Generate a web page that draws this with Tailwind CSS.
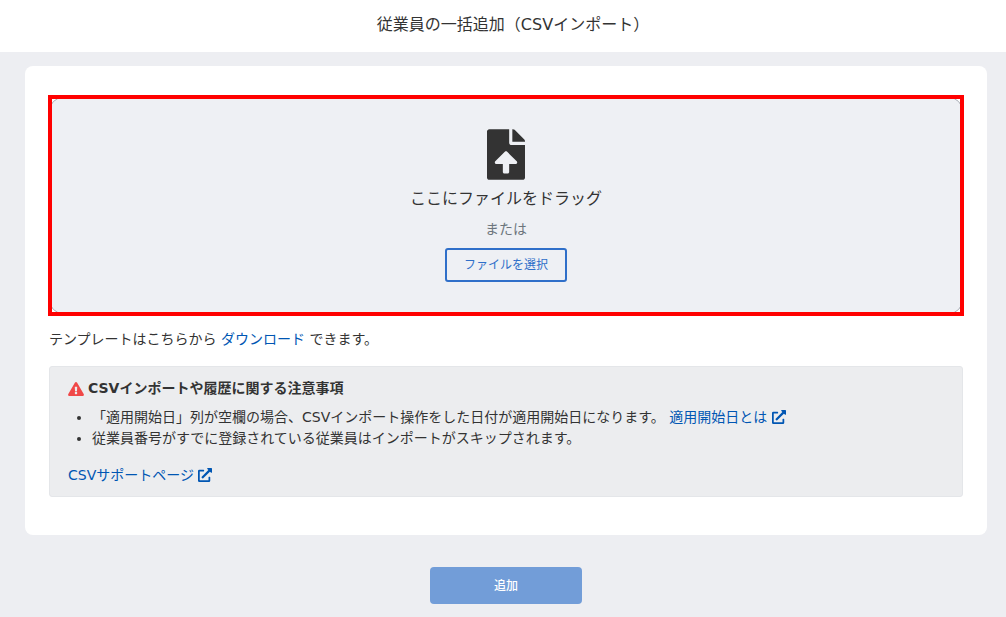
<!DOCTYPE html>
<html lang="ja">
<head>
    <meta charset="UTF-8">
    <meta name="viewport" content="width=device-width, initial-scale=1.0">
    <title>従業員の一括追加（CSVインポート）</title>
    <script src="https://cdn.jsdelivr.net/npm/@tailwindcss/browser@4"></script>
</head>
<body class="min-h-screen bg-[#edeef2] font-['DejaVu_Sans','Noto_Sans_CJK_JP',sans-serif] text-sm leading-[21px] text-[#333]">
    <header class="flex h-13 items-center justify-center bg-white pb-0.5 pl-5">
        <h1 class="text-base">従業員の一括追加（CSVインポート）</h1>
    </header>

    <main class="pt-3.5 pr-[19px] pl-[25px]">
        <section class="rounded-lg bg-white px-6 pt-[31px] pb-[38px]">
            <!-- drop zone -->
            <div class="relative flex flex-col items-center rounded-[14px] border border-[#a9adb5] bg-[#eef0f4] pt-[31px] pb-[31px]">
                <svg class="h-[51px] w-[38px]" viewBox="0 0 384 512" fill="#333" aria-hidden="true">
                    <path d="M224 136V0H24C10.7 0 0 10.7 0 24v464c0 13.3 10.7 24 24 24h336c13.3 0 24-10.7 24-24V160H248c-13.2 0-24-10.8-24-24zm65.18 216.01H224v80c0 8.84-7.16 16-16 16h-32c-8.84 0-16-7.16-16-16v-80H94.82c-14.28 0-21.41-17.29-11.27-27.36l96.42-95.7c6.65-6.61 17.39-6.61 24.04 0l96.42 95.7c10.15 10.07 3.03 27.36-11.25 27.36zM377 105L279.1 7c-4.5-4.5-10.6-7-17-7H256v128h128v-6.1c0-6.3-2.5-12.4-7-16.9z"/>
                </svg>
                <p class="mt-[7px] text-base leading-6">ここにファイルをドラッグ</p>
                <p class="mt-2 text-[#6c757d]">または</p>
                <button type="button" class="mt-2 h-[34px] rounded-[3px] border-2 border-[#2f6fc9] px-[17px] text-xs text-[#2f6fc9]">ファイルを選択</button>
                <div class="pointer-events-none absolute -inset-x-0.5 -inset-y-[3px] border-4 border-[#ff0000]"></div>
            </div>

            <p class="mt-[15px]">テンプレートはこちらから <a href="#" class="text-[#0056b3]">ダウンロード</a> できます。</p>

            <div class="mt-4 rounded-[3px] border border-[#e4e6e9] bg-[#ecedef] px-[18px] pt-[11px] pb-2.5">
                <h2 class="flex items-center gap-1 font-bold">
                    <svg class="h-3.5 w-4" viewBox="0 0 576 512" fill="#f04848" aria-hidden="true">
                        <path d="M569.517 440.013C587.975 472.007 564.806 512 527.94 512H48.054c-36.937 0-59.999-40.055-41.577-71.987L246.423 23.985c18.467-32.009 64.72-31.951 83.154 0l239.94 416.028zM288 354c-25.405 0-46 20.595-46 46s20.595 46 46 46 46-20.595 46-46-20.595-46-46-46zm-43.673-165.346l7.418 136c.347 6.364 5.609 11.346 11.982 11.346h48.546c6.373 0 11.635-4.982 11.982-11.346l7.418-136c.375-6.874-5.098-12.654-11.982-12.654h-63.383c-6.884 0-12.356 5.78-11.981 12.654z"/>
                    </svg>
                    CSVインポートや履歴に関する注意事項
                </h2>
                <ul class="mt-2 list-disc pl-6">
                    <li>「適用開始日」列が空欄の場合、CSVインポート操作をした日付が適用開始日になります。
                        <a href="#" class="text-[#0056b3]">適用開始日とは
                            <svg class="inline h-3.5 w-3.5 align-[-2px]" viewBox="0 0 512 512" fill="currentColor" aria-hidden="true">
                                <path d="M432 320H400a16 16 0 0 0-16 16V448H64V128H208a16 16 0 0 0 16-16V80a16 16 0 0 0-16-16H48A48 48 0 0 0 0 112V464a48 48 0 0 0 48 48H400a48 48 0 0 0 48-48V336A16 16 0 0 0 432 320ZM488 0h-128c-21.4 0-32 25.9-17 41l35.7 35.7L135 320.4a24 24 0 0 0 0 34L157.7 377a24 24 0 0 0 34 0L435.3 133.3 471 169c15 15 41 4.5 41-17V24A24 24 0 0 0 488 0Z"/>
                            </svg></a>
                    </li>
                    <li>従業員番号がすでに登録されている従業員はインポートがスキップされます。</li>
                </ul>
                <p class="mt-4">
                    <a href="#" class="text-[#0056b3]">CSVサポートページ
                        <svg class="inline h-3.5 w-3.5 align-[-2px]" viewBox="0 0 512 512" fill="currentColor" aria-hidden="true">
                            <path d="M432 320H400a16 16 0 0 0-16 16V448H64V128H208a16 16 0 0 0 16-16V80a16 16 0 0 0-16-16H48A48 48 0 0 0 0 112V464a48 48 0 0 0 48 48H400a48 48 0 0 0 48-48V336A16 16 0 0 0 432 320ZM488 0h-128c-21.4 0-32 25.9-17 41l35.7 35.7L135 320.4a24 24 0 0 0 0 34L157.7 377a24 24 0 0 0 34 0L435.3 133.3 471 169c15 15 41 4.5 41-17V24A24 24 0 0 0 488 0Z"/>
                        </svg></a>
                </p>
            </div>
        </section>

        <div class="flex justify-center pt-8">
            <button type="submit" class="h-[37px] w-[152px] rounded bg-[#729dd8] text-xs font-medium text-white">追加</button>
        </div>
    </main>
</body>
</html>
